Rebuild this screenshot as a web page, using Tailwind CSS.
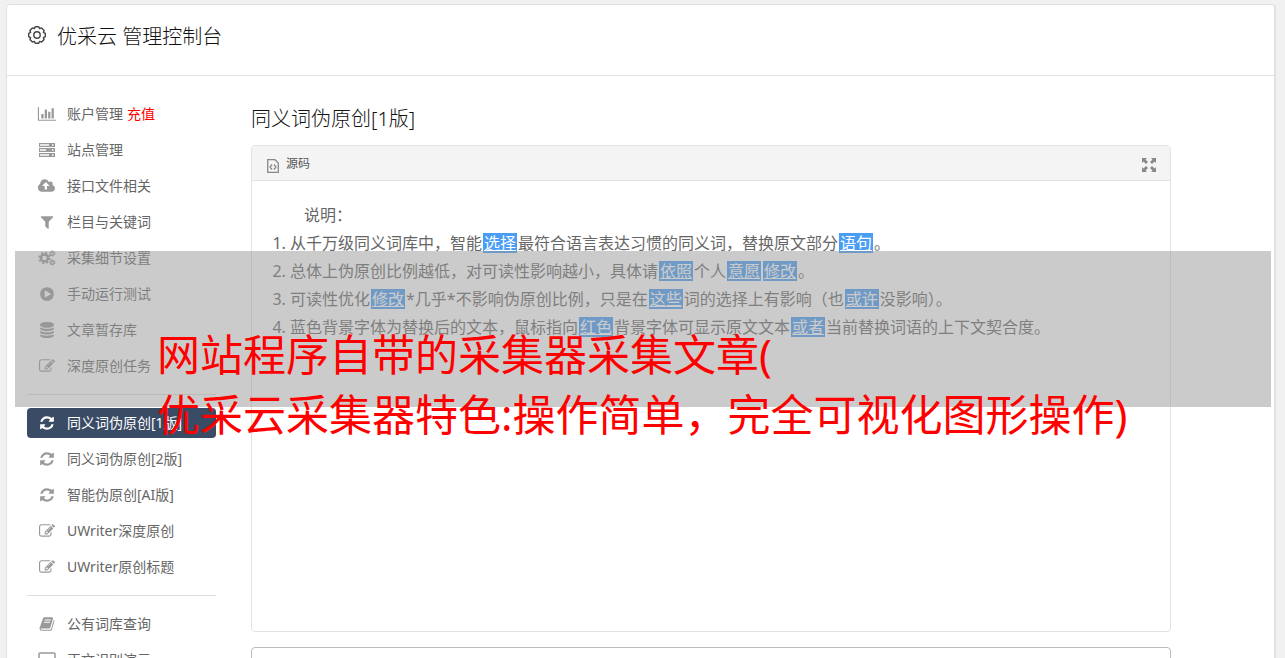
<!DOCTYPE html>
<html lang="zh-CN">
<head>
<meta charset="utf-8">
<meta name="viewport" content="width=device-width, initial-scale=1">
<title>优采云 管理控制台</title>
<script src="https://cdn.jsdelivr.net/npm/@tailwindcss/browser@4"></script>
</head>
<body class="relative h-screen overflow-hidden bg-[#f1f1f1] font-['Noto_Sans','Noto_Sans_CJK_SC',sans-serif] text-sm text-[#666]">
<svg class="hidden" aria-hidden="true">
  <symbol id="chart" viewBox="0 0 2048 1792"><path d="M640 896v512h-256v-512h256zm384-512v1024h-256v-1024h256zm1024 1152v128h-2048v-1536h128v1408h1920zm-640-896v768h-256v-768h256zm384-384v1152h-256v-1152h256z"/></symbol>
  <symbol id="server" viewBox="0 0 18 16"><path fill-rule="evenodd" d="M1 1h16v4H1zM2 2.300v1.400h9v-1.400zM14 2.300v1.400h1.500v-1.400zM1 6h16v4H1zM2 7.300v1.400h6v-1.400zM14 7.300v1.400h1.500v-1.400zM1 11h16v4H1zM2 12.300v1.400h9v-1.400zM14 12.300v1.400h1.500v-1.400z"/></symbol>
  <symbol id="cloud" viewBox="0 0 1920 1792"><path fill-rule="evenodd" d="M1216 864q0-14-9-23l-352-352q-9-9-23-9t-23 9l-351 351q-10 12-10 24 0 14 9 23t23 9h224v352q0 13 9.500 22.500t22.500 9.500h192q13 0 22.500-9.500t9.500-22.500v-352h224q13 0 22.500-9.500t9.500-22.500zm640 288q0 159-112.500 271.500t-271.500 112.500h-1088q-185 0-316.500-131.500t-131.500-316.500q0-130 70-240t188-165q-2-30-2-43 0-212 150-362t362-150q156 0 285.500 87t188.500 231q71-62 166-62 106 0 181 75t75 181q0 76-41 138 130 31 213.500 135.500t83.500 238.500z"/></symbol>
  <symbol id="filter" viewBox="0 0 1792 1792"><path d="M1595 295q17 41-14 70l-493 493v742q0 42-39 59-13 5-25 5-27 0-45-19l-256-256q-19-19-19-45v-486l-493-493q-31-29-14-70 17-39 59-39h1280q42 0 59 39z"/></symbol>
  <symbol id="gears" viewBox="0 0 18 16"><g fill="none" stroke="currentColor"><circle cx="6.500" cy="8" r="3.500" stroke-width="2.600"/><circle cx="6.500" cy="8" r="5.400" stroke-width="1.600" stroke-dasharray="2.120 2.120"/><circle cx="14.300" cy="3.500" r="1.700" stroke-width="1.400"/><circle cx="14.300" cy="3.500" r="2.700" stroke-width="1" stroke-dasharray="1.400 1.420"/><circle cx="14.300" cy="12.500" r="1.700" stroke-width="1.400"/><circle cx="14.300" cy="12.500" r="2.700" stroke-width="1" stroke-dasharray="1.400 1.420"/></g></symbol>
  <symbol id="play" viewBox="0 0 1792 1792"><path fill-rule="evenodd" d="M896 128q209 0 385.500 103t279.500 279.500 103 385.500-103 385.500-279.500 279.500-385.500 103-385.500-103-279.500-279.500-103-385.500 103-385.500 279.500-279.500 385.500-103zm384 823q32-18 32-55t-32-55l-544-320q-31-19-64-1-32 19-32 56v640q0 37 32 56 16 8 32 8 17 0 32-9z"/></symbol>
  <symbol id="database" viewBox="0 0 1792 1792"><path d="M896 768q237 0 443-43t325-127v170q0 69-103 128t-280 93.500-385 34.500-385-34.500-280-93.500-103-128v-170q119 84 325 127t443 43zm0 768q237 0 443-43t325-127v170q0 69-103 128t-280 93.500-385 34.500-385-34.500-280-93.500-103-128v-170q119 84 325 127t443 43zm0-384q237 0 443-43t325-127v170q0 69-103 128t-280 93.500-385 34.500-385-34.500-280-93.500-103-128v-170q119 84 325 127t443 43zm0-1152q208 0 385 34.500t280 93.500 103 128v128q0 69-103 128t-280 93.500-385 34.500-385-34.500-280-93.500-103-128v-128q0-69 103-128t280-93.500 385-34.500z"/></symbol>
  <symbol id="edit" viewBox="0 0 1792 1792"><path fill-rule="evenodd" d="M888 1184l116-116-152-152-116 116v56h96v96h56zm440-720q-16-16-33 1l-350 350q-17 17-1 33t33-1l350-350q17-17 1-33zm80 594v190q0 119-84.500 203.500t-203.500 84.500h-832q-119 0-203.500-84.500t-84.500-203.500v-832q0-119 84.500-203.500t203.500-84.500h832q63 0 117 25 15 7 18 23 3 17-9 29l-49 49q-14 14-32 8-23-6-45-6h-832q-66 0-113 47t-47 113v832q0 66 47 113t113 47h832q66 0 113-47t47-113v-126q0-13 9-22l64-64q15-15 35-7t20 29zm-96-738l288 288-672 672h-288v-288zm444 132l-92 92-288-288 92-92q28-28 68-28t68 28l152 152q28 28 28 68t-28 68z"/></symbol>
  <symbol id="refresh" viewBox="0 0 1792 1792"><path d="M1639 1056q0 5-1 7-64 268-268 434.500t-478 166.500q-146 0-282.500-55t-243.500-157l-129 129q-19 19-45 19t-45-19-19-45v-448q0-26 19-45t45-19h448q26 0 45 19t19 45-19 45l-137 137q71 66 161 102t187 36q134 0 250-65t186-179q11-17 53-117 8-23 30-23h192q13 0 22.500 9.500t9.500 22.500zm25-800v448q0 26-19 45t-45 19h-448q-26 0-45-19t-19-45 19-45l138-138q-148-137-349-137-134 0-250 65t-186 179q-11 17-53 117-8 23-30 23h-199q-13 0-22.500-9.500t-9.500-22.500v-7q65-268 270-434.500t480-166.500q146 0 284 55.500t245 156.500l130-129q19-19 45-19t45 19 19 45z"/></symbol>
  <symbol id="book" viewBox="0 0 1792 1792"><path fill-rule="evenodd" d="M1703 478q40 57 18 129l-275 906q-19 64-76.500 107.500t-122.500 43.500h-923q-77 0-148.500-53.500t-99.500-131.500q-24-67-2-127 0-4 3-27t4-37q1-8-3-21.500t-3-19.500q2-11 8-21t16.500-23.500 16.500-23.500q23-38 45-91.500t30-91.500q3-10 .5-30t-.5-28q3-11 17-28t17-23q21-36 42-92t25-90q1-9-2.500-32t.5-28q4-13 22-30.500t22-22.500q19-26 42.500-84.500t27.500-96.500q1-8-3-25.500t-2-26.500q2-8 9-18t18-23 17-21q8-12 16.500-30.500t15-35 16-36 19.500-32 26.500-23.500 36-11.500 47.500 5.500l-1 3q38-9 51-9h761q74 0 114 56t18 130l-274 906q-36 119-71.500 153.500t-128.500 34.500h-869q-27 0-38 15-11 16-1 43 24 70 144 70h923q29 0 56-15.500t35-41.500l300-987q7-22 5-57 38 15 59 43zm-1064 2q-4 13 2 22.500t20 9.500h608q13 0 25.500-9.500t16.500-22.500l21-64q4-13-2-22.500t-20-9.500h-608q-13 0-25.500 9.500t-16.500 22.500zm-83 256q-4 13 2 22.500t20 9.500h608q13 0 25.500-9.500t16.500-22.500l21-64q4-13-2-22.500t-20-9.500h-608q-13 0-25.500 9.500t-16.500 22.500z"/></symbol>
  <symbol id="screen" viewBox="0 0 18 16"><path fill="none" stroke="currentColor" stroke-width="1.500" d="M2 1h14q1 0 1 1v9q0 1-1 1H2q-1 0-1-1V2q0-1 1-1zM6 15h6M9 12v3"/></symbol>
</svg>

<div class="mx-[6px] mt-1 mr-[9px] rounded border border-r-2 border-[#e2e2e2] bg-white">
  <header class="flex h-[71px] items-start gap-[10px] border-b border-[#e2e2e2] px-5 pt-[17px]">
    <svg class="mt-[3px] size-5 text-[#444]" viewBox="-10 -10 20 20" fill="none" stroke="currentColor" stroke-width="1.400" stroke-linejoin="round" aria-hidden="true"><circle r="3.200"/><path d="M8.300-1.700V1.700L6.400 2.650 7.100 4.600 4.600 7.100 2.650 6.400 1.700 8.300H-1.700L-2.650 6.400-4.600 7.100-7.100 4.600-6.400 2.650-8.300 1.700V-1.700L-6.400-2.650-7.100-4.600-4.600-7.100-2.650-6.400-1.700-8.300H1.700L2.650-6.400 4.600-7.100 7.100-4.600 6.400-2.650z"/></svg>
    <h1 class="text-xl leading-[30px] font-light text-[#111]">优采云 管理控制台</h1>
  </header>
  <div class="flex gap-[35px] pt-[23px] pr-[103px] pl-5">
    <nav class="w-[189px] shrink-0" aria-label="主菜单">
      <ul class="flex flex-col gap-[6px]">
        <li class="flex h-[30px] items-center"><a href="#" class="flex items-center gap-[10px] pl-[10px]"><svg class="h-4 w-5 fill-current text-[#999]"><use href="#chart"/></svg>账户管理</a><a href="#" class="pl-1 text-[#f00]">充值</a></li>
        <li><a href="#" class="flex h-[30px] items-center gap-[10px] pl-[10px]"><svg class="h-4 w-5 fill-current text-[#999]"><use href="#server"/></svg>站点管理</a></li>
        <li><a href="#" class="flex h-[30px] items-center gap-[10px] pl-[10px]"><svg class="h-4 w-5 fill-current text-[#999]"><use href="#cloud"/></svg>接口文件相关</a></li>
        <li><a href="#" class="flex h-[30px] items-center gap-[10px] pl-[10px]"><svg class="h-4 w-5 fill-current text-[#999]"><use href="#filter"/></svg>栏目与关键词</a></li>
        <li><a href="#" class="flex h-[30px] items-center gap-[10px] pl-[10px]"><svg class="h-4 w-5 fill-current text-[#999]"><use href="#gears"/></svg>采集细节设置</a></li>
        <li><a href="#" class="flex h-[30px] items-center gap-[10px] pl-[10px]"><svg class="h-4 w-5 fill-current text-[#999]"><use href="#play"/></svg>手动运行测试</a></li>
        <li><a href="#" class="flex h-[30px] items-center gap-[10px] pl-[10px]"><svg class="h-4 w-5 fill-current text-[#999]"><use href="#database"/></svg>文章暂存库</a></li>
        <li><a href="#" class="flex h-[30px] items-center gap-[10px] pl-[10px]"><svg class="h-4 w-5 fill-current text-[#999]"><use href="#edit"/></svg>深度原创任务</a></li>
      </ul>
      <hr class="my-[13px] border-[#ddd]">
      <ul class="flex flex-col gap-[6px]">
        <li><a href="#" aria-current="page" class="flex h-[30px] items-center gap-[10px] rounded bg-[#3a4b66] pl-[10px] text-white"><svg class="h-4 w-5 fill-current"><use href="#refresh"/></svg>同义词伪原创[1版]</a></li>
        <li><a href="#" class="flex h-[30px] items-center gap-[10px] pl-[10px]"><svg class="h-4 w-5 fill-current text-[#999]"><use href="#refresh"/></svg>同义词伪原创[2版]</a></li>
        <li><a href="#" class="flex h-[30px] items-center gap-[10px] pl-[10px]"><svg class="h-4 w-5 fill-current text-[#999]"><use href="#refresh"/></svg>智能伪原创[AI版]</a></li>
        <li><a href="#" class="flex h-[30px] items-center gap-[10px] pl-[10px]"><svg class="h-4 w-5 fill-current text-[#999]"><use href="#edit"/></svg>UWriter深度原创</a></li>
        <li><a href="#" class="flex h-[30px] items-center gap-[10px] pl-[10px]"><svg class="h-4 w-5 fill-current text-[#999]"><use href="#edit"/></svg>UWriter原创标题</a></li>
      </ul>
      <hr class="my-[13px] border-[#ddd]">
      <ul class="flex flex-col gap-[6px]">
        <li><a href="#" class="flex h-[30px] items-center gap-[10px] pl-[10px]"><svg class="h-4 w-5 fill-current text-[#999]"><use href="#book"/></svg>公有词库查询</a></li>
        <li><a href="#" class="flex h-[30px] items-center gap-[10px] pl-[10px]"><svg class="h-4 w-5 fill-current text-[#999]"><use href="#screen"/></svg>正文识别演示</a></li>
      </ul>
    </nav>
    <main class="min-w-0 flex-1 pt-1">
      <h2 class="text-xl leading-8 font-light text-[#111]">同义词伪原创[1版]</h2>
      <section class="mt-[10px] overflow-hidden rounded border border-[#e2e2e2]">
        <div class="flex h-[35px] items-center justify-between border-b border-[#e2e2e2] bg-[#f4f4f4] pr-[13px] pl-[15px]">
          <button type="button" class="flex items-center gap-[7px] pt-px text-xs text-[#555]"><svg class="mt-1 h-[14px] w-3" viewBox="0 0 12 14" fill="none" stroke="#888" stroke-width="1.300" aria-hidden="true"><path d="M.7.700h7.300l3.300 3.300v9.300H.7zM5 5.500L3 8l2 2.500M7 5.500L9 8l-2 2.500"/></svg>源码</button>
          <button type="button" aria-label="全屏"><svg class="mt-[3px] size-4 fill-[#888]" viewBox="0 0 16 16" aria-hidden="true"><path d="M1 1h5L4.500 2.500 7 5 5 7 2.500 4.500 1 6zM15 1h-5l1.500 1.500L9 5l2 2 2.500-2.500L15 6zM1 15h5l-1.500-1.500L7 11 5 9l-2.500 2.500L1 10zM15 15h-5l1.500-1.500L9 11l2-2 2.500 2.500L15 10z"/></svg></button>
        </div>
        <div class="min-h-[450px] pt-5 pl-[38px] text-base leading-7">
          <p class="pl-[14px]">说明：</p>
          <ol class="list-decimal">
            <li>从千万级同义词库中，智能<a href="#" class="mx-px inline-block bg-[#499df5] px-px leading-5 text-white underline">选择</a>最符合语言表达习惯的同义词，替换原文部分<a href="#" class="mx-px inline-block bg-[#499df5] px-px leading-5 text-white underline">语句</a>。</li>
            <li>总体上伪原创比例越低，对可读性影响越小，具体请<a href="#" class="mx-px inline-block bg-[#499df5] px-px leading-5 text-white underline">依照</a>个人<a href="#" class="mx-px inline-block bg-[#499df5] px-px leading-5 text-white underline">意愿</a><a href="#" class="mx-px inline-block bg-[#499df5] px-px leading-5 text-white underline">修改</a>。</li>
            <li>可读性优化<a href="#" class="mx-px inline-block bg-[#499df5] px-px leading-5 text-white underline">修改</a>*几乎*不影响伪原创比例，只是在<a href="#" class="mx-px inline-block bg-[#499df5] px-px leading-5 text-white underline">这些</a>词的选择上有影响（也<a href="#" class="mx-px inline-block bg-[#499df5] px-px leading-5 text-white underline">或许</a>没影响）。</li>
            <li>蓝色背景字体为替换后的文本，鼠标指向<a href="#" class="mx-px inline-block bg-[#499df5] px-px leading-5 text-white underline">红色</a>背景字体可显示原文文本<a href="#" class="mx-px inline-block bg-[#499df5] px-px leading-5 text-white underline">或者</a>当前替换词语的上下文契合度。</li>
          </ol>
        </div>
      </section>
      <textarea aria-label="原文" class="mt-[15px] block h-40 w-full resize-none rounded-sm border border-[#bbb]"></textarea>
    </main>
  </div>
</div>

<!-- Caption band laid over the page -->
<div class="absolute top-[251px] right-[14px] left-[15px] h-[156px] bg-[#979797]/50 pt-[74px] pl-[142px]">
  <p class="text-[43px] leading-[60px] whitespace-nowrap text-[#f00]">网站程序自带的采集器采集文章(<br>优采云采集器特色:操作简单，完全可视化图形操作)</p>
</div>
</body>
</html>
